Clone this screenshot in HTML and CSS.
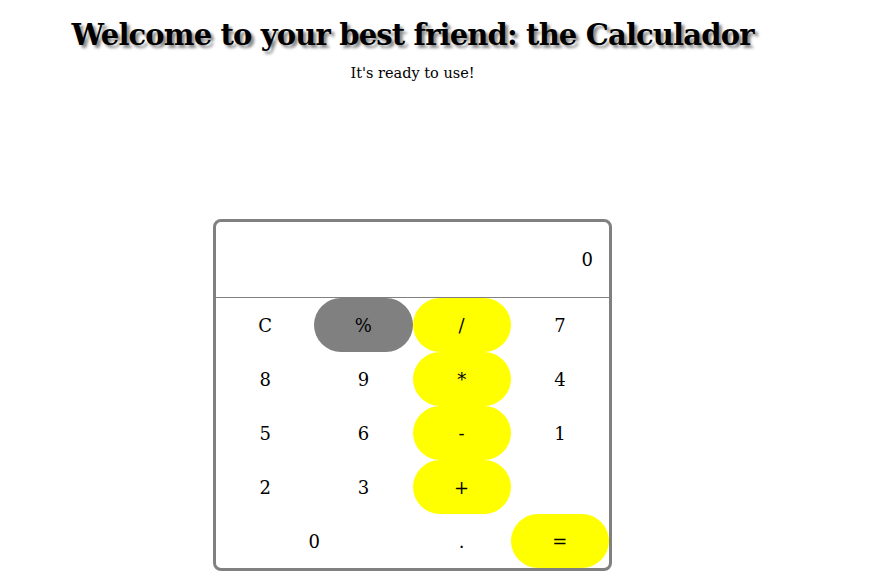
FILE: index.html
```html
<!DOCTYPE html>
<html>
<head>
<meta charset="utf-8">
<link rel="stylesheet" href="styles.css">
</head>
<body>
<div class="page">
  <h1 class="title">Welcome to your best friend: the Calculador</h1>
  <p class="subtitle">It's ready to use!</p>
  <div class="calc">
    <div class="display">0</div>
    <div class="keys">
      <div class="key">C</div>
      <div class="key gray">%</div>
      <div class="key op">/</div>
      <div class="key">7</div>
      <div class="key">8</div>
      <div class="key">9</div>
      <div class="key op">*</div>
      <div class="key">4</div>
      <div class="key">5</div>
      <div class="key">6</div>
      <div class="key op">-</div>
      <div class="key">1</div>
      <div class="key">2</div>
      <div class="key">3</div>
      <div class="key op">+</div>
      <div class="key"></div>
      <div class="key wide">0</div>
      <div class="key">.</div>
      <div class="key op">=</div>
    </div>
  </div>
</div>
</body>
</html>
```
FILE: styles.css
```css
html, body {
  margin: 0;
  padding: 0;
  background: #fff;
}
body {
  padding: 8px;
  font-family: "DejaVu Serif", "Liberation Serif", serif;
  color: #000;
}
.page {
  width: 809px;
  text-align: center;
}
.title {
  margin: 7px 0 0;
  font-size: 29px;
  line-height: 40px;
  letter-spacing: -0.85px;
  font-weight: bold;
  text-shadow: 3px 3px 3px #888;
}
.subtitle {
  margin: 9px 0 0;
  font-size: 14.5px;
  line-height: 18px;
}
.calc {
  width: 393px;
  margin: 137px auto 0;
  border: 3px solid #808080;
  border-radius: 8px;
  overflow: hidden;
}
.display {
  height: 75px;
  border-bottom: 1px solid #808080;
  display: flex;
  align-items: center;
  justify-content: flex-end;
  padding-right: 16px;
  font-size: 18px;
}
.keys {
  display: grid;
  grid-template-columns: repeat(4, 1fr);
  grid-auto-rows: 54px;
}
.key {
  display: flex;
  align-items: center;
  justify-content: center;
  font-size: 18px;
  border-radius: 30px;
}
.key.gray {
  background: #808080;
}
.key.op {
  background: #ffff00;
}
.key.wide {
  grid-column: span 2;
}
```
